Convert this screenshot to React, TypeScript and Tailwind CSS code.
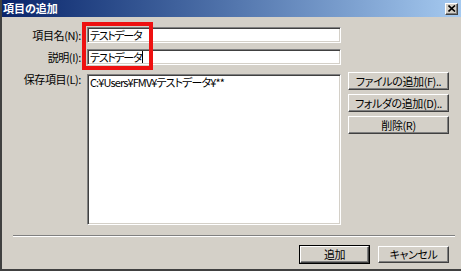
const ui = "font-['MS_UI_Gothic','Noto_Sans_CJK_JP',sans-serif] [font-feature-settings:'palt'] text-[11px] leading-none text-black tracking-[-0.4px]";

const sunken =
  "border border-t-[#808080] border-l-[#808080] border-b-white border-r-white shadow-[inset_1px_1px_0_#404040,inset_-1px_-1px_0_#d4d0c8] bg-white";

const raised =
  "border border-t-white border-l-white border-b-[#404040] border-r-[#404040] shadow-[inset_-1px_-1px_0_#808080] bg-[#d4d0c8]";

function WinButton({ label, className = "", isDefault = false }: { label: string; className?: string; isDefault?: boolean }) {
  return (
    <button
      type="button"
      className={`flex items-center justify-center ${className} ${isDefault ? "outline outline-1 outline-black" : ""} ${raised} ${ui}`}
    >
      {label}
    </button>
  );
}

export default function App() {
  return (
    <div className={`relative flex h-[271px] w-[461px] flex-col overflow-hidden border-l-2 border-b-2 border-l-[#404040] border-b-[#404040] bg-[#d4d0c8] ${ui}`}>
      <header className="flex h-[17px] shrink-0 items-center justify-between bg-gradient-to-r from-[#0a246a] to-[#a6caf0] pl-[1px] pr-[3px]">
        <span className="text-[11px] font-bold tracking-[0px] text-white">項目の追加</span>
        <span className={`flex h-[12px] w-[13px] items-center justify-center ${raised}`}>
          <svg width="8" height="7" viewBox="0 0 8 7">
            <path d="M0.5 0.5 L7 6.5 M7 0.5 L0.5 6.5" stroke="black" strokeWidth="1.6" />
          </svg>
        </span>
      </header>

      <div className="flex pt-[10px]">
        <div className="flex w-[339px] flex-col">
          <div className="flex items-center">
            <label className="w-[85px] pr-[6px] text-right">項目名(N):</label>
            <div className={`flex h-[16px] w-[254px] items-center pl-[2px] tracking-[-1.3px] ${sunken}`}>テストデータ</div>
          </div>
          <div className="mt-[6px] flex items-center">
            <label className="w-[85px] pr-[6px] text-right">説明(I):</label>
            <div className={`flex h-[16px] w-[254px] items-center pl-[2px] tracking-[-1.3px] ${sunken}`}>
              テストデータ<span className="ml-[1px] inline-block h-[12px] w-px bg-black" />
            </div>
          </div>
          <div className="mt-[9px] flex items-start">
            <label className="w-[85px] pr-[6px] text-right">保存項目(L):</label>
            <div className={`h-[151px] w-[254px] pl-[2px] pt-[2px] tracking-[-0.9px] ${sunken}`}>C:¥Users¥FMV¥テストデータ¥**</div>
          </div>
        </div>

        <div className="ml-[7px] mt-[45px] flex flex-col gap-[4px]">
          <WinButton label="ファイルの追加(F).." className="h-[18px] w-[101px]" />
          <WinButton label="フォルダの追加(D).." className="h-[18px] w-[101px]" />
          <WinButton label="削除(R)" className="h-[18px] w-[101px]" />
        </div>
      </div>

      <div className="ml-[11px] mr-[6px] mt-[10px] h-[2px] border-t border-b border-t-[#808080] border-b-white" />

      <div className="mt-[9px] flex justify-end gap-[9px] pr-[12px]">
        <WinButton label="追加" isDefault className="h-[17px] w-[69px]" />
        <WinButton label="キャンセル" className="h-[17px] w-[71px]" />
      </div>

      <div className="absolute left-[80px] top-[22px] h-[48px] w-[71px] border-4 border-[#ee1111]" />
    </div>
  );
}
